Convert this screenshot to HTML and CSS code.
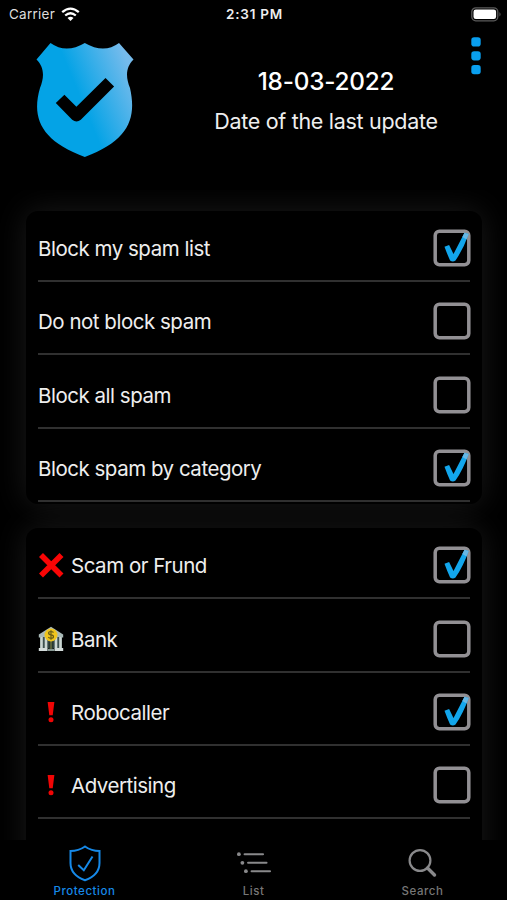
FILE: index.html
```
<!DOCTYPE html>
<html lang="en">
<head>
<meta charset="utf-8">
<title>Protection</title>
<link rel="stylesheet" href="styles.css">
</head>
<body>
<svg class="defs" width="0" height="0" aria-hidden="true">
  <defs>
    <linearGradient id="shine" gradientUnits="userSpaceOnUse" x1="78" y1="92" x2="131" y2="70">
      <stop offset="0" stop-color="#04a3e6"/><stop offset="1" stop-color="#75bbec"/>
    </linearGradient>
    <symbol id="off" viewBox="0 0 38 38"><rect x="2.200" y="2.200" width="33.600" height="33.600" rx="4.2" fill="none" stroke="#929094" stroke-width="3.500"/></symbol>
    <symbol id="on" viewBox="0 0 38 38"><rect x="2.200" y="2.200" width="33.600" height="33.600" rx="4.2" fill="none" stroke="#929094" stroke-width="3.500"/><path d="M11.500 17.700l4.600-1.800 4.400 9L31.500 3.700l4.200 1.200q-5.500 15.500-13.200 26.500-2.700 2-5.400 0Q14.500 26 11.500 17.700z" fill="#12a6ec"/><path d="M31.500 3.700l4.200 1.200-2.200 5.600-4.200-2.500z" fill="#67b7e5"/></symbol>
    <symbol id="bang" viewBox="0 0 26 26"><path d="M9.600 3h6.800l-1.700 13.200h-3.400z" fill="#f00505"/><circle cx="13" cy="20.700" r="2.500" fill="#f00505"/></symbol>
  </defs>
</svg>
<div class="app">
  <div class="status">
    <div class="carrier"><span>Carrier</span>
      <svg width="19" height="15" viewBox="0 0 19 15" fill="none" stroke="#fff" stroke-width="2.300"><path d="M1.200 5.200q8.300-7.200 16.600 0M4.200 8.500q5.300-4.600 10.600 0"/><path d="M6.500 11q3-2.400 6 0l-3 3z" fill="#fff" stroke="none"/></svg>
    </div>
    <span class="time">2:31 PM</span>
    <svg class="battery" width="31" height="15" viewBox="0 0 31 15"><rect x=".8" y=".8" width="26" height="13" rx="4" fill="none" stroke="#5b5b5b" stroke-width="1.300"/><rect x="2.500" y="2.500" width="22.600" height="9.600" rx="2.300" fill="#fff"/><path d="M28.500 5q2 2.300 0 4.600z" fill="#666"/></svg>
  </div>
  <header class="hero">
    <svg class="shield" width="98" height="116" viewBox="36 42 98 116">
      <path d="M50.500 43Q66 54 84.800 43Q104 54 119 43L133.500 59.500C125 68 126 78 130 88C137 119 128 141 84.800 157C42 141 31 119 40 88C44 78 45 68 36.500 59.500z" fill="url(#shine)"/>
      <path d="M55.800 103l8.600-8.300 12 12L105.500 78l8.600 8.500-33.300 33.300q-4.300 3.500-8.600 0z" fill="#000"/>
    </svg>
    <div class="update"><div class="date">18-03-2022</div><div class="caption">Date of the last update</div></div>
    <svg class="more" width="10" height="38" viewBox="0 0 10 38" fill="#099fef"><rect x=".3" y=".3" width="9.400" height="9.200" rx="2.800"/><rect x=".3" y="14.200" width="9.400" height="9.200" rx="2.800"/><rect x=".3" y="28.100" width="9.400" height="9.200" rx="2.800"/></svg>
  </header>
  <main class="content">
    <section class="card">
      <div class="row"><span class="label">Block my spam list</span><svg class="box"><use href="#on"/></svg></div>
      <div class="row"><span class="label">Do not block spam</span><svg class="box"><use href="#off"/></svg></div>
      <div class="row"><span class="label">Block all spam</span><svg class="box"><use href="#off"/></svg></div>
      <div class="row"><span class="label">Block spam by category</span><svg class="box"><use href="#on"/></svg></div>
    </section>
    <section class="card">
      <div class="row">
        <svg class="icon" viewBox="0 0 26 26"><path d="M3 3l20.500 20.500M23.500 3L3 23.500" stroke="#fa0505" stroke-width="5.600"/></svg>
        <span class="label">Scam or Frund</span><svg class="box"><use href="#on"/></svg></div>
      <div class="row">
        <svg class="icon" viewBox="0 0 26 26">
          <path d="M.8 8.500L13 .7l12.200 7.800v3H.8z" fill="#a9b9b7"/><path d="M2 11h22v11H2z" fill="#3d5050"/>
          <path d="M3.500 11v12M8 11v12M18 11v12M22.500 11v12" stroke="#cbd6d3" stroke-width="2.600"/>
          <path d="M10.500 15h5v8h-5z" fill="#283832"/><path d="M13 15v8" stroke="#8a8b48"/>
          <path d="M.8 22h8.600v3H.8zM16.600 22h8.600v3h-8.600z" fill="#d4dcdb"/><path d="M9.400 23h7.200v2H9.400z" fill="#879894"/>
          <circle cx="13" cy="9" r="6.500" fill="#efc51d"/><path d="M15.500 6.500q-1-1-2.500-1c-3.200 0-3.200 3 0 3.400 3.400.4 3.200 3.500 0 3.500q-1.700 0-2.700-1.200M13 4.200v9.600" fill="none" stroke="#675b17" stroke-width="1.200"/>
        </svg>
        <span class="label">Bank</span><svg class="box"><use href="#off"/></svg></div>
      <div class="row"><svg class="icon"><use href="#bang"/></svg><span class="label">Robocaller</span><svg class="box"><use href="#on"/></svg></div>
      <div class="row"><svg class="icon"><use href="#bang"/></svg><span class="label">Advertising</span><svg class="box"><use href="#off"/></svg></div>
      <div class="row"></div>
    </section>
  </main>
  <nav class="tabs">
    <div class="tab active"><svg width="36" height="40" viewBox="0 0 36 40" fill="none" stroke="#1689e8" stroke-width="2"><path d="M18 3.500Q11.500 8 3.500 8V20Q3.500 32 18 37.200Q32.500 32 32.500 20V8Q24.500 8 18 3.500z"/><path d="M11.200 22l5.600 5.200L25.500 13.500"/></svg><span>Protection</span></div>
    <div class="tab"><svg width="36" height="40" viewBox="0 0 36 40" fill="none" stroke="#89898b" stroke-width="2.100" stroke-linecap="round"><path d="M8.600 11.200H27M12.100 19.800H30.500M15.600 28.200H34"/><g fill="#89898b" stroke="none"><circle cx="2.900" cy="11.200" r="1.900"/><circle cx="6.400" cy="19.800" r="1.900"/><circle cx="9.900" cy="28.200" r="1.900"/></g></svg><span>List</span></div>
    <div class="tab"><svg width="36" height="40" viewBox="0 0 36 40" fill="none" stroke="#89898b" stroke-linecap="round"><circle cx="15" cy="17.500" r="10.400" stroke-width="2.200"/><path d="M22.500 25l7 7" stroke-width="3.400"/></svg><span>Search</span></div>
  </nav>
</div>
</body>
</html>
```
FILE: styles.css
```
* { box-sizing: border-box; }
body { margin: 0; background: #000; color: #eee; font-family: Inter, "Liberation Sans", sans-serif; }
svg { display: block; flex: none; }
.defs { position: absolute; }
.app { width: 507px; height: 900px; display: flex; flex-direction: column; overflow: hidden; }
.status { height: 28px; padding: 0 7px 0 9px; display: grid; grid-template-columns: 1fr auto 1fr; align-items: center; font-size: 13.5px; flex: none; }
.carrier { display: flex; align-items: center; gap: 6px; letter-spacing: .25px; color: #ddd; }
.time { font-weight: 600; letter-spacing: .75px; }
.battery { justify-self: end; margin-right: -2px; }
.hero { height: 162px; flex: none; display: flex; align-items: flex-start; padding: 14px 26px 0 36px; }
.update { flex: 1; text-align: center; padding: 22px 0 0 47px; white-space: nowrap; }
.date { font-size: 24.300px; line-height: 34px; font-weight: 500; letter-spacing: -.2px; color: #fff; }
.caption { font-size: 21.500px; line-height: 30px; margin-top: 8px; letter-spacing: -.3px; }
.more { margin-top: -5px; }
.content { height: 650px; flex: none; padding: 21px 25px 0 26px; overflow: hidden; }
.card { border-radius: 12px; background: #000; box-shadow: 0 0 32px rgba(255,255,255,.1); padding: 0 12px; height: 293.300px; margin-bottom: 24px; }
.card + .card { height: 400px; margin-bottom: 0; }
.row { height: 71px; margin-bottom: 2.300px; padding-top: 5px; border-bottom: 2px solid #303030; display: flex; align-items: center; font-size: 20.500px; letter-spacing: -.48px; white-space: nowrap; }
.label { padding-top: 1px; }
.box { width: 38px; height: 38px; margin-left: auto; margin-right: -1px; }
.icon { width: 26px; height: 26px; margin-right: 7px; }
.tabs { flex: 1; display: grid; grid-template-columns: repeat(3, 1fr); background: #000; }
.tab { display: flex; flex-direction: column; align-items: center; padding-top: 3px; color: #777; font-size: 11.500px; font-weight: 500; line-height: 14px; letter-spacing: .55px; }
.tab span { margin-top: 1px; }
.active { color: #1689e8; }
```
